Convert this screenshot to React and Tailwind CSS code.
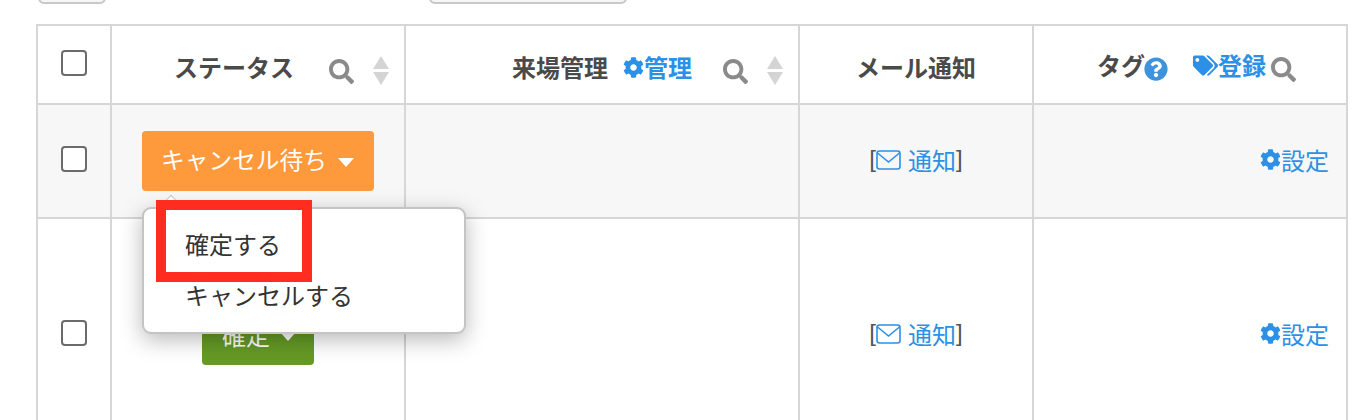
import React from "react";
import { FaSearch, FaCog, FaTags, FaQuestionCircle } from "react-icons/fa";

const font = { fontFamily: '"Noto Sans CJK JP", "Liberation Sans", sans-serif' };

function Search() {
  return <FaSearch className="text-[#8a8a8a] w-[25px] h-[25px] shrink-0 blur-[0.4px] translate-y-[4px]" />;
}
function Sort() {
  return (
    <svg width="18" height="30" viewBox="0 0 18 30" className="shrink-0 translate-y-[4px]">
      <path d="M9 0 L17 13 L1 13 Z M1 16 L17 16 L9 29 Z" fill="#d4d4d4" />
    </svg>
  );
}
function Caret({ className }) {
  return (
    <svg width="16" height="9" viewBox="0 0 16 9" className={className}>
      <path d="M0 0 L16 0 L8 9 Z" fill="#ffffff" />
    </svg>
  );
}
function Mail() {
  return (
    <svg width="25" height="20" viewBox="0 0 25 20" fill="none" stroke="#2b90e6" strokeWidth="1.6" className="shrink-0">
      <rect x="1" y="1" width="23" height="18" rx="2.5" />
      <path d="M1.5 3 L12.5 12 L23.5 3" />
    </svg>
  );
}
function Check() {
  return <div className="w-[26px] h-[26px] rounded-[4px] border-2 border-[#6b6b6b] bg-white" />;
}
function Notice() {
  return (
    <div className="flex items-center justify-center text-[24px] text-[#2b90e6] leading-none">
      <span className="text-[#555] font-['Liberation_Sans'] -translate-y-[1px]">[</span>
      <Mail />
      <span className="ml-[7px]">通知</span>
      <span className="text-[#555] font-['Liberation_Sans'] -translate-y-[1px]">]</span>
    </div>
  );
}
function Setting() {
  return (
    <div className="flex items-center justify-end pr-[17px] text-[24px] text-[#2b90e6] leading-none">
      <FaCog className="w-[21px] h-[21px]" />
      <span>設定</span>
    </div>
  );
}
const cell = "border-2 border-[#d6d6d6] p-0 align-middle";

export default function App() {
  return (
    <div className="relative w-[1356px] h-[420px] overflow-hidden bg-white" style={font}>
      <div className="flex h-[4px] items-end">
        <div className="ml-[38px] w-[68px] h-[12px] shrink-0 rounded-[6px] border-2 border-[#c8c8c8] bg-[#f6f6f6]" />
        <div className="ml-[323px] w-[198px] h-[12px] shrink-0 rounded-[6px] border-2 border-[#c8c8c8] bg-[#f6f6f6]" />
      </div>
      <table className="ml-[36px] mt-[20px] w-[1312px] table-fixed border-collapse">
        <colgroup>
          <col className="w-[74px]" />
          <col className="w-[294px]" />
          <col className="w-[394px]" />
          <col className="w-[234px]" />
          <col className="w-[314px]" />
        </colgroup>
        <tbody>
          <tr className="h-[79px] text-[24px] font-bold text-[#4a4a4a] leading-none">
            <td className={cell}>
              <div className="flex justify-center -mt-[3px]"><Check /></div>
            </td>
            <td className={cell}>
              <div className="flex items-center pl-[62px] mt-[5px]">
                <span className="w-[120px] whitespace-nowrap">ステータス</span>
                <span className="ml-[35px]"><Search /></span>
                <span className="ml-[18px]"><Sort /></span>
              </div>
            </td>
            <td className={cell}>
              <div className="flex items-center pl-[106px] mt-[5px]">
                <span className="whitespace-nowrap">来場管理</span>
                <span className="ml-[15px] flex items-center text-[#2b90e6]">
                  <FaCog className="w-[21px] h-[21px]" />
                  <span>管理</span>
                </span>
                <span className="ml-[31px]"><Search /></span>
                <span className="ml-[18px]"><Sort /></span>
              </div>
            </td>
            <td className={`${cell} text-center`}>
              <div className="mt-[5px]">メール通知</div>
            </td>
            <td className={cell}>
              <div className="flex items-center pl-[63px] mt-[4px]">
                <span className="-mt-[3px]">タグ</span>
                <FaQuestionCircle className="w-[24px] h-[24px] text-[#3f93dd] mt-[5px] -ml-[1px]" />
                <span className="ml-[25px] flex items-center text-[#2b90e6] -mt-[3px]">
                  <FaTags className="w-[25px] h-[23px]" />
                  <span>登録</span>
                </span>
                <span className="ml-[5px] -mt-[2px]"><Search /></span>
              </div>
            </td>
          </tr>
          <tr className="h-[114px] bg-[#f7f7f7]">
            <td className={cell}>
              <div className="flex justify-center -mt-[4px]"><Check /></div>
            </td>
            <td className={cell}>
              <div className="flex justify-center pr-[1px]">
                <div className="w-[232px] h-[60px] rounded-[4px] bg-[#ff9a3c] text-white text-[24px] leading-none flex items-center justify-center gap-[11px]">
                  <span className="whitespace-nowrap -translate-y-[1px] text-[23.7px]">キャンセル待ち</span>
                  <Caret className="mt-[3px] shrink-0" />
                </div>
              </div>
            </td>
            <td className={cell}></td>
            <td className={cell}><div className="-mt-[3px]"><Notice /></div></td>
            <td className={cell}><div className="-mt-[3px]"><Setting /></div></td>
          </tr>
          <tr className="h-[230px]">
            <td className={cell}>
              <div className="flex justify-center"><Check /></div>
            </td>
            <td className={cell}>
              <div className="flex justify-center">
                <div className="w-[112px] h-[59px] rounded-[4px] bg-[#659a26] text-white text-[24px] leading-none flex items-center justify-center gap-[10px] mt-[4px]">
                  <span className="ml-[2px]">確定</span>
                  <Caret className="mt-[3px] shrink-0" />
                </div>
              </div>
            </td>
            <td className={cell}></td>
            <td className={cell}><div className="mt-[1px]"><Notice /></div></td>
            <td className={cell}><div className="mt-[1px]"><Setting /></div></td>
          </tr>
        </tbody>
      </table>

      <div className="absolute left-[142px] top-[207px] w-[324px] h-[127px] rounded-[9px] border-2 border-[#c4c4c4] bg-white shadow-[0_6px_22px_rgba(0,0,0,0.28)] text-[24px] text-[#333] leading-none">
        <div className="absolute left-[19px] -top-[11px] w-[16px] h-[16px] rotate-45 bg-white border-l border-t border-[#c4c4c4]" />
        <div className="absolute left-[41px] top-[23px] whitespace-nowrap">確定する</div>
        <div className="absolute left-[41px] top-[74px] whitespace-nowrap">キャンセルする</div>
      </div>
      <div className="absolute left-[156px] top-[200px] w-[156px] h-[82px] border-[10px] border-[#ff2d20]" />
    </div>
  );
}
